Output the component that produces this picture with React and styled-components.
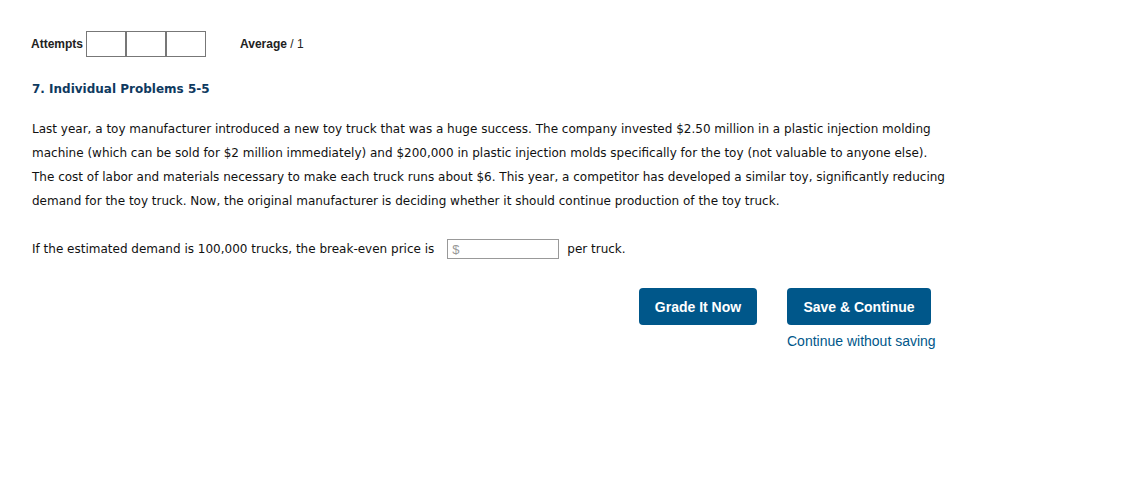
import React from "react";
import styled, { createGlobalStyle } from "styled-components";

const Global = createGlobalStyle`
  html, body { margin: 0; padding: 0; background: #fff; }
  body { font-family: "DejaVu Sans", Verdana, sans-serif; }
`;

const Page = styled.div`
  width: 1131px;
  height: 482px;
  box-sizing: border-box;
  padding: 31px 0 0 31px;
`;

const TopBar = styled.div`
  display: flex;
  align-items: center;
  font-family: "Liberation Sans", Arial, sans-serif;
  font-size: 12px;
  color: #222;
  height: 26px;
`;

const Label = styled.span`
  font-weight: bold;
  margin-right: 3px;
`;

const Boxes = styled.div`
  display: flex;
  margin-right: 34px;
`;

const Box = styled.div`
  width: 38px;
  height: 24px;
  border: 1px solid #777;
`;

const Avg = styled.span`
  font-weight: bold;
  & b { font-weight: normal; }
`;

const Title = styled.h2`
  margin: 24px 0 0 1px;
  font-family: "DejaVu Sans", Verdana, sans-serif;
  font-size: 12px;
  font-weight: bold;
  color: #0f3a5f;
  line-height: 16px;
`;

const Para = styled.p`
  margin: 20px 0 0 1px;
  width: 918px;
  font-size: 12px;
  line-height: 24px;
  color: #111;
`;

const Question = styled.div`
  display: flex;
  align-items: center;
  margin: 26px 0 0 1px;
  font-size: 12px;
  color: #111;
`;

const InputWrap = styled.span`
  display: inline-flex;
  align-items: center;
  width: 112px;
  height: 20px;
  border: 1px solid #999;
  margin: 0 8px 0 13px;
  box-sizing: border-box;
  padding-left: 4px;
  color: #999;
  font-family: "Liberation Sans", Arial, sans-serif;
  font-size: 13px;
`;

const Actions = styled.div`
  display: flex;
  justify-content: flex-start;
  margin: 29px 0 0 608px;
  gap: 30px;
`;

const Col = styled.div`
  display: flex;
  flex-direction: column;
  align-items: flex-start;
`;

const Button = styled.button`
  height: 37px;
  width: ${(p) => p.$w}px;
  border: none;
  border-radius: 4px;
  background: #00578a;
  color: #fff;
  font-family: "Liberation Sans", Arial, sans-serif;
  font-weight: bold;
  font-size: 14px;
  padding: 0;
`;

const Link = styled.a`
  margin-top: 8px;
  font-family: "Liberation Sans", Arial, sans-serif;
  font-size: 14px;
  color: #00578a;
  text-decoration: none;
`;

export default function App() {
  return (
    <>
      <Global />
      <Page>
        <TopBar>
          <Label>Attempts</Label>
          <Boxes>
            <Box />
            <Box />
            <Box />
          </Boxes>
          <Avg>
            Average <b>/ 1</b>
          </Avg>
        </TopBar>
        <Title>7. Individual Problems 5-5</Title>
        <Para>
          Last year, a toy manufacturer introduced a new toy truck that was a huge success. The company invested $2.50 million in a plastic injection molding machine (which can be sold for $2 million immediately) and $200,000 in plastic injection molds specifically for the toy (not valuable to anyone else). The cost of labor and materials necessary to make each truck runs about $6. This year, a competitor has developed a similar toy, significantly reducing demand for the toy truck. Now, the original manufacturer is deciding whether it should continue production of the toy truck.
        </Para>
        <Question>
          If the estimated demand is 100,000 trucks, the break-even price is
          <InputWrap>$</InputWrap>
          per truck.
        </Question>
        <Actions>
          <Button $w={118}>Grade It Now</Button>
          <Col>
            <Button $w={144}>Save &amp; Continue</Button>
            <Link href="#">Continue without saving</Link>
          </Col>
        </Actions>
      </Page>
    </>
  );
}
